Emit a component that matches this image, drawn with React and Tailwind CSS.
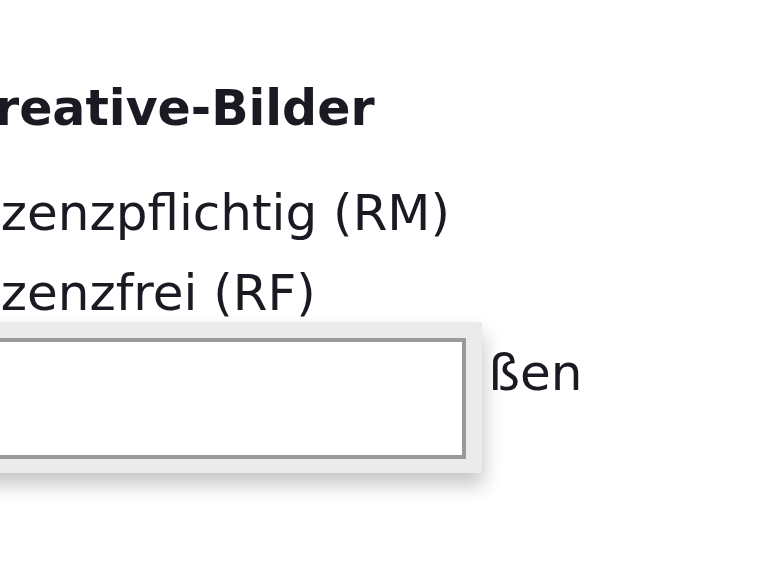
import React from "react";

export default function App() {
  return (
    <div className="relative w-[770px] h-[578px] overflow-hidden bg-white text-[#1a1a22]" style={{ fontFamily: '"DejaVu Sans", Verdana, sans-serif' }}>
      <div className="ml-[-41px] pt-[69px] whitespace-nowrap">
        <h2 className="text-[49px] font-bold leading-[80px]">Creative-Bilder</h2>
        <ul className="mt-[24px] text-[50px] leading-[80px]">
          <li>Lizenzpflichtig (RM)</li>
          <li>Lizenzfrei (RF)</li>
          <li className="ml-[6px]">Alle verfügbaren Grö<span className="ml-[4px]">ßen</span></li>
        </ul>
      </div>
      <div className="absolute left-[-20px] top-[322px] w-[502px] h-[151px] bg-[#ebebeb] shadow-[2px_12px_18px_rgba(0,0,0,0.22)] pt-[16px] pl-[12px]">
        <div className="w-[474px] h-[121px] bg-white border-[4px] border-[#9a9a9a]"></div>
      </div>
    </div>
  );
}
